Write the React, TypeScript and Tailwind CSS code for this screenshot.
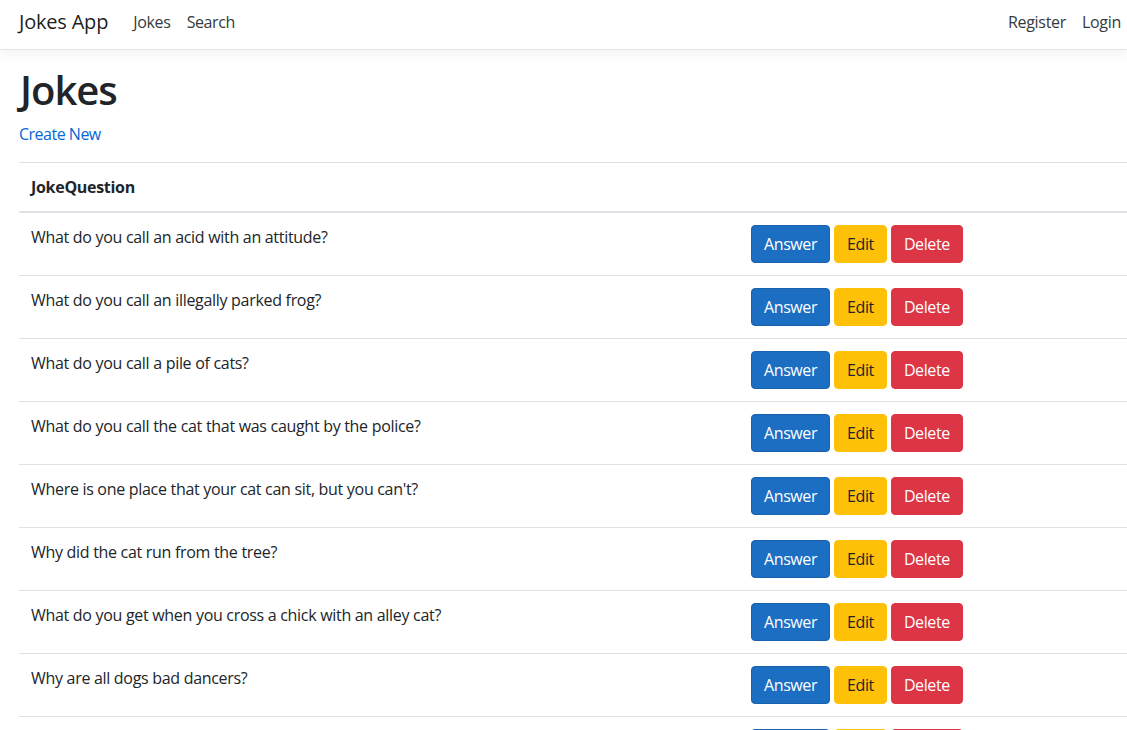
import React from "react";

const jokes = [
  "What do you call an acid with an attitude?",
  "What do you call an illegally parked frog?",
  "What do you call a pile of cats?",
  "What do you call the cat that was caught by the police?",
  "Where is one place that your cat can sit, but you can't?",
  "Why did the cat run from the tree?",
  "What do you get when you cross a chick with an alley cat?",
  "Why are all dogs bad dancers?",
  "Why did the dog cross the road?",
];

const font = { fontFamily: '"Open Sans", "Noto Sans", sans-serif' };

export default function App() {
  return (
    <div className="min-h-screen bg-white text-[#212529] tracking-[-0.3px]" style={font}>
      <nav className="h-[50px] border-b border-[#e5e5e5] shadow-[0_4px_12px_rgba(0,0,0,0.05)] bg-white flex items-center pl-[19px] pr-0 pb-[6px]">
        <span className="text-[20px] leading-[30px] tracking-[-0.2px] text-[rgba(0,0,0,0.9)] mr-[17px]">Jokes App</span>
        <a className="px-[8px] text-[16px] leading-[24px] tracking-[-0.3px] text-[#343a40]">Jokes</a>
        <a className="px-[8px] text-[16px] leading-[24px] tracking-[-0.4px] text-[#343a40]">Search</a>
        <div className="flex-1" />
        <a className="px-[8px] text-[16px] leading-[24px] text-[#343a40]">Register</a>
        <a className="pl-[8px] pr-[6px] text-[16px] leading-[24px] text-[#343a40]">Login</a>
      </nav>
      <main className="pl-[19px] pt-[16px]">
        <h1 className="text-[40px] leading-[48px] font-semibold tracking-[-1px] mb-[8px] pl-[1px]">Jokes</h1>
        <p className="mb-[16px] text-[16px] leading-[24px]">
          <a className="text-[#0366d6] tracking-[-0.5px]">Create New</a>
        </p>
        <table className="w-[1140px] border-collapse text-[16px] leading-[24px]">
          <thead>
            <tr className="border-t border-[#dee2e6]">
              <th className="w-[720px] text-left font-bold p-[12px] border-b-2 border-[#dee2e6]">JokeQuestion</th>
              <th className="p-[12px] border-b-2 border-[#dee2e6]"></th>
            </tr>
          </thead>
          <tbody>
            {jokes.map((j, i) => (
              <tr key={i} className="border-b border-[#dee2e6]">
                <td className="align-top p-[12px] tracking-[-0.3px]">{j}</td>
                <td className="align-top p-[12px]">
                  <div className="flex gap-[4px]">
                    <button className="h-[38px] px-[12px] rounded-[4px] bg-[#1b6ec2] border border-[#1861ac] text-white tracking-[-0.4px]">Answer</button>
                    <button className="h-[38px] px-[12px] rounded-[4px] bg-[#ffc107] border border-[#ffc107] text-[#212529] tracking-[-0.4px]">Edit</button>
                    <button className="h-[38px] px-[12px] rounded-[4px] bg-[#dc3545] border border-[#dc3545] text-white tracking-[-0.4px]">Delete</button>
                  </div>
                </td>
              </tr>
            ))}
          </tbody>
        </table>
      </main>
    </div>
  );
}
